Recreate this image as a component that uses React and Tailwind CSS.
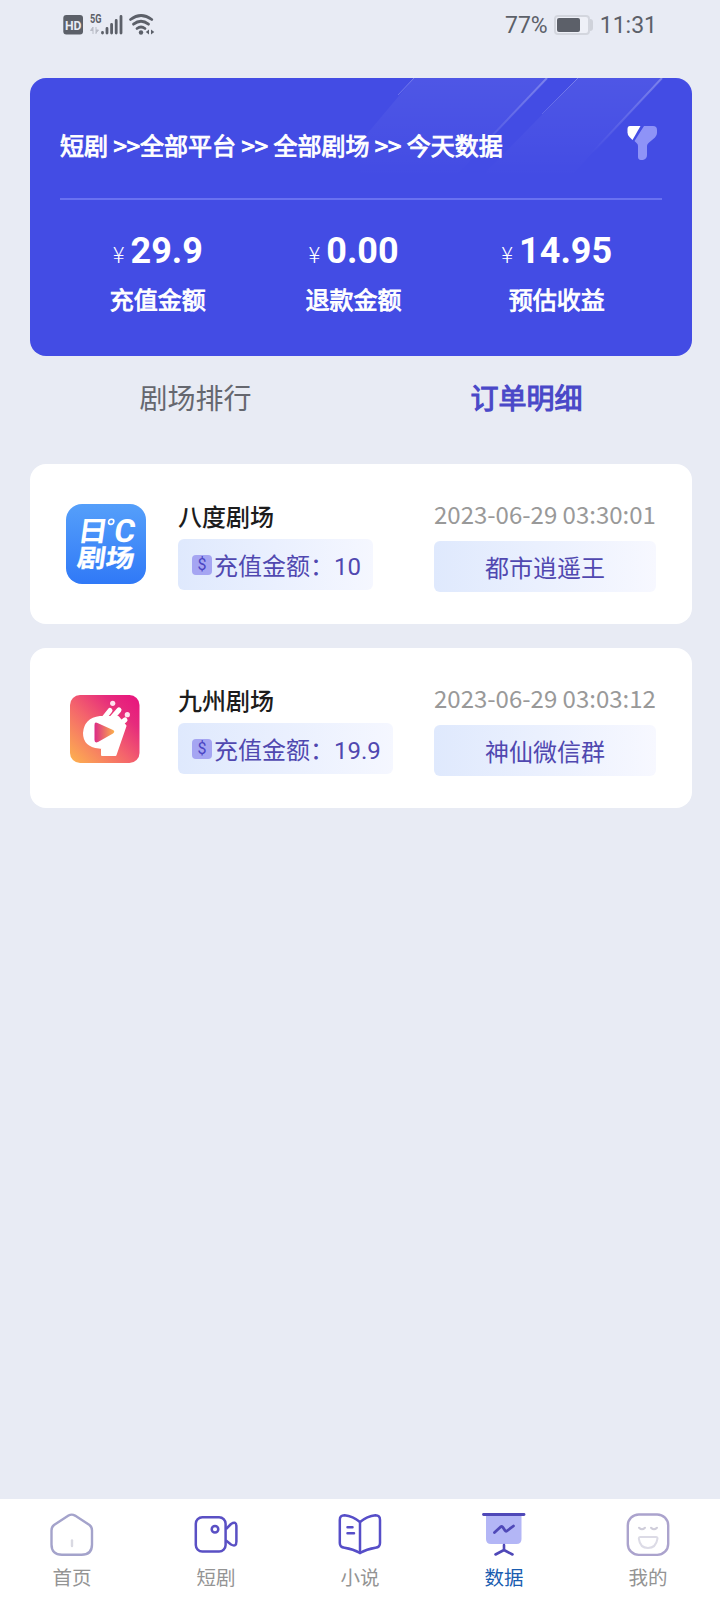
const stats = [
  { label: '充值金额', value: '29.9' },
  { label: '退款金额', value: '0.00' },
  { label: '预估收益', value: '14.95' },
];

const orders = [
  { id: 1, name: '八度剧场', amount: '10', time: '2023-06-29 03:30:01', title: '都市逍遥王', Logo: BaduLogo },
  { id: 2, name: '九州剧场', amount: '19.9', time: '2023-06-29 03:03:12', title: '神仙微信群', Logo: JiuzhouLogo },
];

const navItems = [
  { label: '首页', Icon: HomeIcon },
  { label: '短剧', Icon: VideoIcon },
  { label: '小说', Icon: BookIcon },
  { label: '数据', Icon: BoardIcon, active: true },
  { label: '我的', Icon: FaceIcon },
];

function BaduLogo() {
  return (
    <svg className="h-20 w-20" viewBox="0 0 80 80">
      <defs>
        <linearGradient id="badu" x1="0" y1="0" x2="0" y2="1">
          <stop offset="0" stopColor="#559ffa" />
          <stop offset="1" stopColor="#3079f7" />
        </linearGradient>
      </defs>
      <rect width="80" height="80" rx="16" fill="url(#badu)" />
      <g fill="#fff" fontFamily="'Noto Sans CJK SC', sans-serif" fontWeight="700" transform="skewX(-8)">
        <text x="16" y="37" fontSize="28" textLength="30" lengthAdjust="spacingAndGlyphs">日</text>
        <circle cx="47.7" cy="17.8" r="2.6" fill="none" stroke="#fff" strokeWidth="1.6" />
        <text x="52.5" y="38.5" fontSize="32" fontFamily="Roboto, sans-serif">C</text>
        <text x="19" y="63" fontSize="25" textLength="57" lengthAdjust="spacingAndGlyphs" stroke="#fff" strokeWidth="0.3">剧场</text>
      </g>
    </svg>
  );
}

function JiuzhouLogo() {
  return (
    <svg className="h-20 w-20" viewBox="0 0 80 80">
      <defs>
        <linearGradient id="jiuzhou" x1="0" y1="1" x2="1" y2="0">
          <stop offset="0" stopColor="#fdb44e" />
          <stop offset="0.45" stopColor="#f4646c" />
          <stop offset="0.75" stopColor="#e62b7c" />
          <stop offset="1" stopColor="#e8127e" />
        </linearGradient>
        <linearGradient id="play" x1="0" y1="0" x2="1" y2="0">
          <stop offset="0" stopColor="#dc2b86" />
          <stop offset="1" stopColor="#fbb04b" />
        </linearGradient>
      </defs>
      <rect x="4" y="7" width="69.5" height="68" rx="10" fill="url(#jiuzhou)" />
      <g fill="#fff" stroke="#fff" strokeLinejoin="round" strokeLinecap="round">
        <path d="M34 29 Q19 31 18 45 Q18 58 33 59.5 L36 60 L36 67 H49.5 L59.5 38 L52 29 Z" strokeWidth="2" />
        <path d="M38 30 L44 22.5 M46 30 L53 22 M54 36 L59 32" strokeWidth="5" />
      </g>
      <circle cx="46.7" cy="15.3" r="2.6" fill="#ffe1ee" />
      <circle cx="61.3" cy="26.7" r="2.6" fill="#ffe1ee" />
      <path d="M28.5 37 Q28.5 33.5 31.5 35 L47 42 Q49.5 43.7 47 45.5 L32 54 Q28.5 55.5 28.5 52 Z" fill="url(#play)" />
    </svg>
  );
}

function HomeIcon() {
  return (
    <svg className="h-11 w-11" viewBox="0 0 44 44" fill="none" stroke="#a4a3cb" strokeWidth="2.4" strokeLinecap="round" strokeLinejoin="round">
      <path d="M18.5 2.6 Q21.7 0.6 25 2.6 L39.5 12 Q42 14 42 17.5 V31.5 Q42 41.8 31.5 41.8 H12 Q1.5 41.8 1.5 31.5 V17.5 Q1.5 14 4 12 Z" />
      <path d="M22 27.5 V33" stroke="#d9d9e2" />
    </svg>
  );
}

function VideoIcon() {
  return (
    <svg className="h-11 w-11" viewBox="0 0 44 44" fill="none" stroke="#5a50c4" strokeWidth="2.5" strokeLinejoin="round">
      <rect x="1.8" y="4.3" width="29.8" height="34.2" rx="6.5" />
      <circle cx="21" cy="16.3" r="3.3" />
      <path d="M32 16 L37 11 Q42.4 7.7 42.4 13.5 V28.5 Q42.4 34.5 37 31.5 L32 27.5" />
    </svg>
  );
}

function BookIcon() {
  return (
    <svg className="h-11 w-11" viewBox="0 0 44 44" fill="none" stroke="#564ec8" strokeWidth="2.5" strokeLinecap="round" strokeLinejoin="round">
      <path d="M22 9 C17 5 12 3 6.5 2.3 Q1.8 2.3 1.8 7 V30 Q1.8 34.3 6.5 34.7 C12 35.5 17 37 22 40 C27 37 32 35.5 37.5 34.7 Q42 34.3 42 30 V7 Q42 2.3 37.5 2.3 C32 3 27 5 22 9 Z" />
      <path d="M22 9 V40" />
      <path d="M9.5 14.2 H14.5 M9.5 20.2 H16" />
    </svg>
  );
}

function BoardIcon() {
  return (
    <svg className="h-11 w-11" viewBox="0 0 44 44" fill="none" stroke="#4f48b8" strokeLinecap="round" strokeLinejoin="round">
      <path d="M4 2 H39.5 V26 Q39.500 31 34.5 31 H9 Q4 31 4 26 Z" fill="#b3b6f6" stroke="none" />
      <path d="M1.5 1.5 H42" strokeWidth="2.8" />
      <path d="M12.5 19.5 L18.5 14 Q20 13 21 14.5 L23 17.5 Q24 19 25.5 17.5 L31.5 13" strokeWidth="2.8" />
      <path d="M22 32 V37 M13.5 41.5 L22 37 L30.5 41.5" strokeWidth="2.6" />
    </svg>
  );
}

function FaceIcon() {
  return (
    <svg className="h-11 w-11" viewBox="0 0 44 44" fill="none" stroke="#dcdbe6" strokeWidth="2" strokeLinecap="round" strokeLinejoin="round">
      <rect x="1.8" y="1.5" width="40.4" height="40.4" rx="11" stroke="#aba3cd" strokeWidth="2.4" />
      <path d="M13 14.8 Q16 17.8 19 14.8 M25 14.8 Q28 17.8 31 14.8" stroke="#cfcdda" />
      <path d="M14 24 H30 Q31.5 24 31.5 25.5 Q30 35 22 35 Q14 35 12.8 25.5 Q12.8 24 14 24 Z" />
    </svg>
  );
}

function CoinIcon() {
  return (
    <span className="mr-[2px] ml-[2px] flex h-5 w-5 items-center justify-center rounded-[4px] bg-[#a5a5f2] font-[Roboto,sans-serif] text-[16px] leading-none text-[#4a44c4]">
      $
    </span>
  );
}

function StatusBar() {
  return (
    <header className="flex h-[50px] items-center justify-between pr-16 pl-[63px] text-[#5c6069]">
      <svg className="h-8 w-24" viewBox="0 -4 96 32" fill="#5c6069">
        <rect x="0.3" y="2" width="19.7" height="19.5" rx="3" />
        <text x="10.2" y="16.6" fill="#e8ebf5" fontSize="13.5" fontWeight="700" fontFamily="Roboto, sans-serif" textAnchor="middle" textLength="16.5" lengthAdjust="spacingAndGlyphs">HD</text>
        <text x="27" y="10" fontSize="12.5" fontWeight="700" fontFamily="Roboto, sans-serif" textLength="11.5" lengthAdjust="spacingAndGlyphs">5G</text>
        <path d="M30 14 V21 M30 14 L27.5 17.5 H30 M33 21 V14 M33 20 L35.5 17 H33" stroke="#b9bcc6" strokeWidth="1" fill="#b9bcc6" />
        <g stroke="#5c6069" strokeWidth="2.8" strokeLinecap="round">
          <path d="M39.5 19.5 V20 M44 15.5 V20 M48.6 11.5 V20 M53.2 7.5 V20 M58 3.5 V20" />
        </g>
        <g fill="none" stroke="#5c6069" strokeWidth="2.8" strokeLinecap="round">
          <path d="M67.5 6.5 Q78 -1.5 88.8 6.5" />
          <path d="M70.5 11.2 Q78 5.2 85.5 11.2" />
          <path d="M74 15.5 Q78 12.5 82 15.5" />
        </g>
        <circle cx="78" cy="19.5" r="2.2" />
        <path d="M86 16.5 V21.5 L82.8 19 Z M88 16.5 V21.5 L91.3 19 Z" />
      </svg>
      <div className="flex items-center font-[Roboto,sans-serif] text-[23px] leading-none">
        <span>77%</span>
        <span className="ml-[6px] flex h-5 w-9 items-center rounded-[4px] border-2 border-[#d3d6de] bg-[#eef0f7] p-px">
          <span className="h-[14px] w-[23px] rounded-[2px] bg-[#5c6069]" />
        </span>
        <span className="h-3 w-[3px] rounded-r bg-[#cfd2da]" />
        <span className="-mr-px ml-[7px]">11:31</span>
      </div>
    </header>
  );
}

function SummaryCard() {
  return (
    <section className="relative mt-7 h-[278px] overflow-hidden rounded-2xl bg-[#434ce4] px-[30px] text-white">
      <svg className="absolute top-0 right-0 h-[120px] w-[332px]" viewBox="0 0 332 120">
        <defs>
          <linearGradient id="beam" x1="0" y1="0" x2="0" y2="1">
            <stop offset="0" stopColor="#fff" stopOpacity="0.06" />
            <stop offset="1" stopColor="#fff" stopOpacity="0" />
          </linearGradient>
          <linearGradient id="ray" gradientUnits="userSpaceOnUse" x1="0" y1="0" x2="0" y2="75">
            <stop offset="0" stopColor="#fff" stopOpacity="0.28" />
            <stop offset="1" stopColor="#fff" stopOpacity="0" />
          </linearGradient>
        </defs>
        <path d="M54 0 H187 L94 100 H-30 Z" fill="url(#beam)" />
        <path d="M218 0 H302 L209 100 H120 Z" fill="url(#beam)" />
        <g stroke="url(#ray)">
          <path d="M54 0 L38 17" strokeWidth="1" />
          <path d="M187 0 L130 60" strokeWidth="2" />
          <path d="M218 0 L182 36" strokeWidth="1" />
          <path d="M302 0 L232 75" strokeWidth="2" />
        </g>
      </svg>
      <div className="flex h-[120px] items-center justify-between pt-[14px]">
        <h1 className="text-2xl leading-none font-normal whitespace-nowrap [-webkit-text-stroke:0.9px_white]">短剧 &gt;&gt;全部平台 &gt;&gt; 全部剧场 &gt;&gt; 今天数据</h1>
        <svg className="mr-[5px] mb-1 h-[34px] w-[30px]" viewBox="0 0 30 34">
          <path d="M17 0 H26 Q30 0 30 4 V7 Q30 9.5 28 11.5 L21.5 17 Q20 18.5 20 20 V29 Q20 33 16 34 Q11 34.5 11 31 V20 Q11 18 9.5 17 L7.5 15 Z" fill="#8e93f7" />
          <path d="M3 0 H13.5 L5.5 14 L2.5 11 Q0.5 9 0.5 6.5 V3 Q0.5 0 3 0 Z" fill="#fff" />
        </svg>
      </div>
      <div className="h-[2px] bg-[#6971f1]" />
      <div className="flex justify-around pt-[30px]">
        {stats.map((s) => (
          <div key={s.label} className="flex flex-col items-center">
            <div className="flex items-baseline">
              <span className="text-[22px] leading-none font-light">¥</span>
              <span className="ml-[6px] font-[Roboto,sans-serif] text-4xl leading-[42px] font-bold">{s.value}</span>
            </div>
            <span className="mt-3 text-2xl leading-[30px] font-normal [-webkit-text-stroke:0.9px_white]">{s.label}</span>
          </div>
        ))}
      </div>
    </section>
  );
}

function OrderCard({ name, amount, time, title, Logo }) {
  return (
    <article className="flex h-40 rounded-2xl bg-white pt-8 pr-9 pl-9">
      <div className="pt-2">
        <Logo />
      </div>
      <div className="ml-8 flex flex-col items-start pt-[5px]">
        <h2 className="text-2xl leading-[30px] font-medium text-[#1c1c1c]">{name}</h2>
        <div className="mt-2 flex h-[51px] items-center rounded-md bg-linear-to-r from-[#dfe9fd] to-[#f5f7ff] px-3 text-2xl text-[#5048b0]">
          <CoinIcon />
          <span className="pt-[5px] font-[Roboto,'Noto_Sans_CJK_SC',sans-serif] leading-none">充值金额：{amount}</span>
        </div>
      </div>
      <div className="ml-auto flex w-[222px] flex-col pt-[3px]">
        <time className="text-2xl leading-[30px] whitespace-nowrap text-[#999]">{time}</time>
        <div className="mt-3 flex h-[51px] items-center justify-center rounded-md bg-linear-to-r from-[#dfe9fd] to-[#f7f8ff] text-2xl leading-none text-[#5048b0]">
          {title}
        </div>
      </div>
    </article>
  );
}

function TabBar() {
  return (
    <nav className="flex h-[101px] bg-white pt-[14px]">
      {navItems.map(({ label, Icon, active }) => (
        <a key={label} className={`flex flex-1 flex-col items-center ${active ? 'text-[#1a5db0]' : 'text-[#949494]'}`}>
          <Icon />
          <span className="mt-[6px] text-[19.5px] leading-7">{label}</span>
        </a>
      ))}
    </nav>
  );
}

export default function App() {
  return (
    <div className="flex h-[1600px] w-[720px] flex-col bg-[#e8ebf4] font-['Noto_Sans_CJK_SC',sans-serif]">
      <StatusBar />
      <main className="flex-1 pr-7 pl-[30px]">
        <SummaryCard />
        <div className="flex h-[108px] pt-[21px] text-center text-[28px] leading-10">
          <button className="h-10 flex-1 text-[#65676f]">剧场排行</button>
          <button className="h-10 flex-1 text-[#4a48c8] [-webkit-text-stroke:1.1px_#4a48c8]">订单明细</button>
        </div>
        <div className="flex flex-col gap-6">
          {orders.map((o) => (
            <OrderCard key={o.id} {...o} />
          ))}
        </div>
      </main>
      <TabBar />
    </div>
  );
}
